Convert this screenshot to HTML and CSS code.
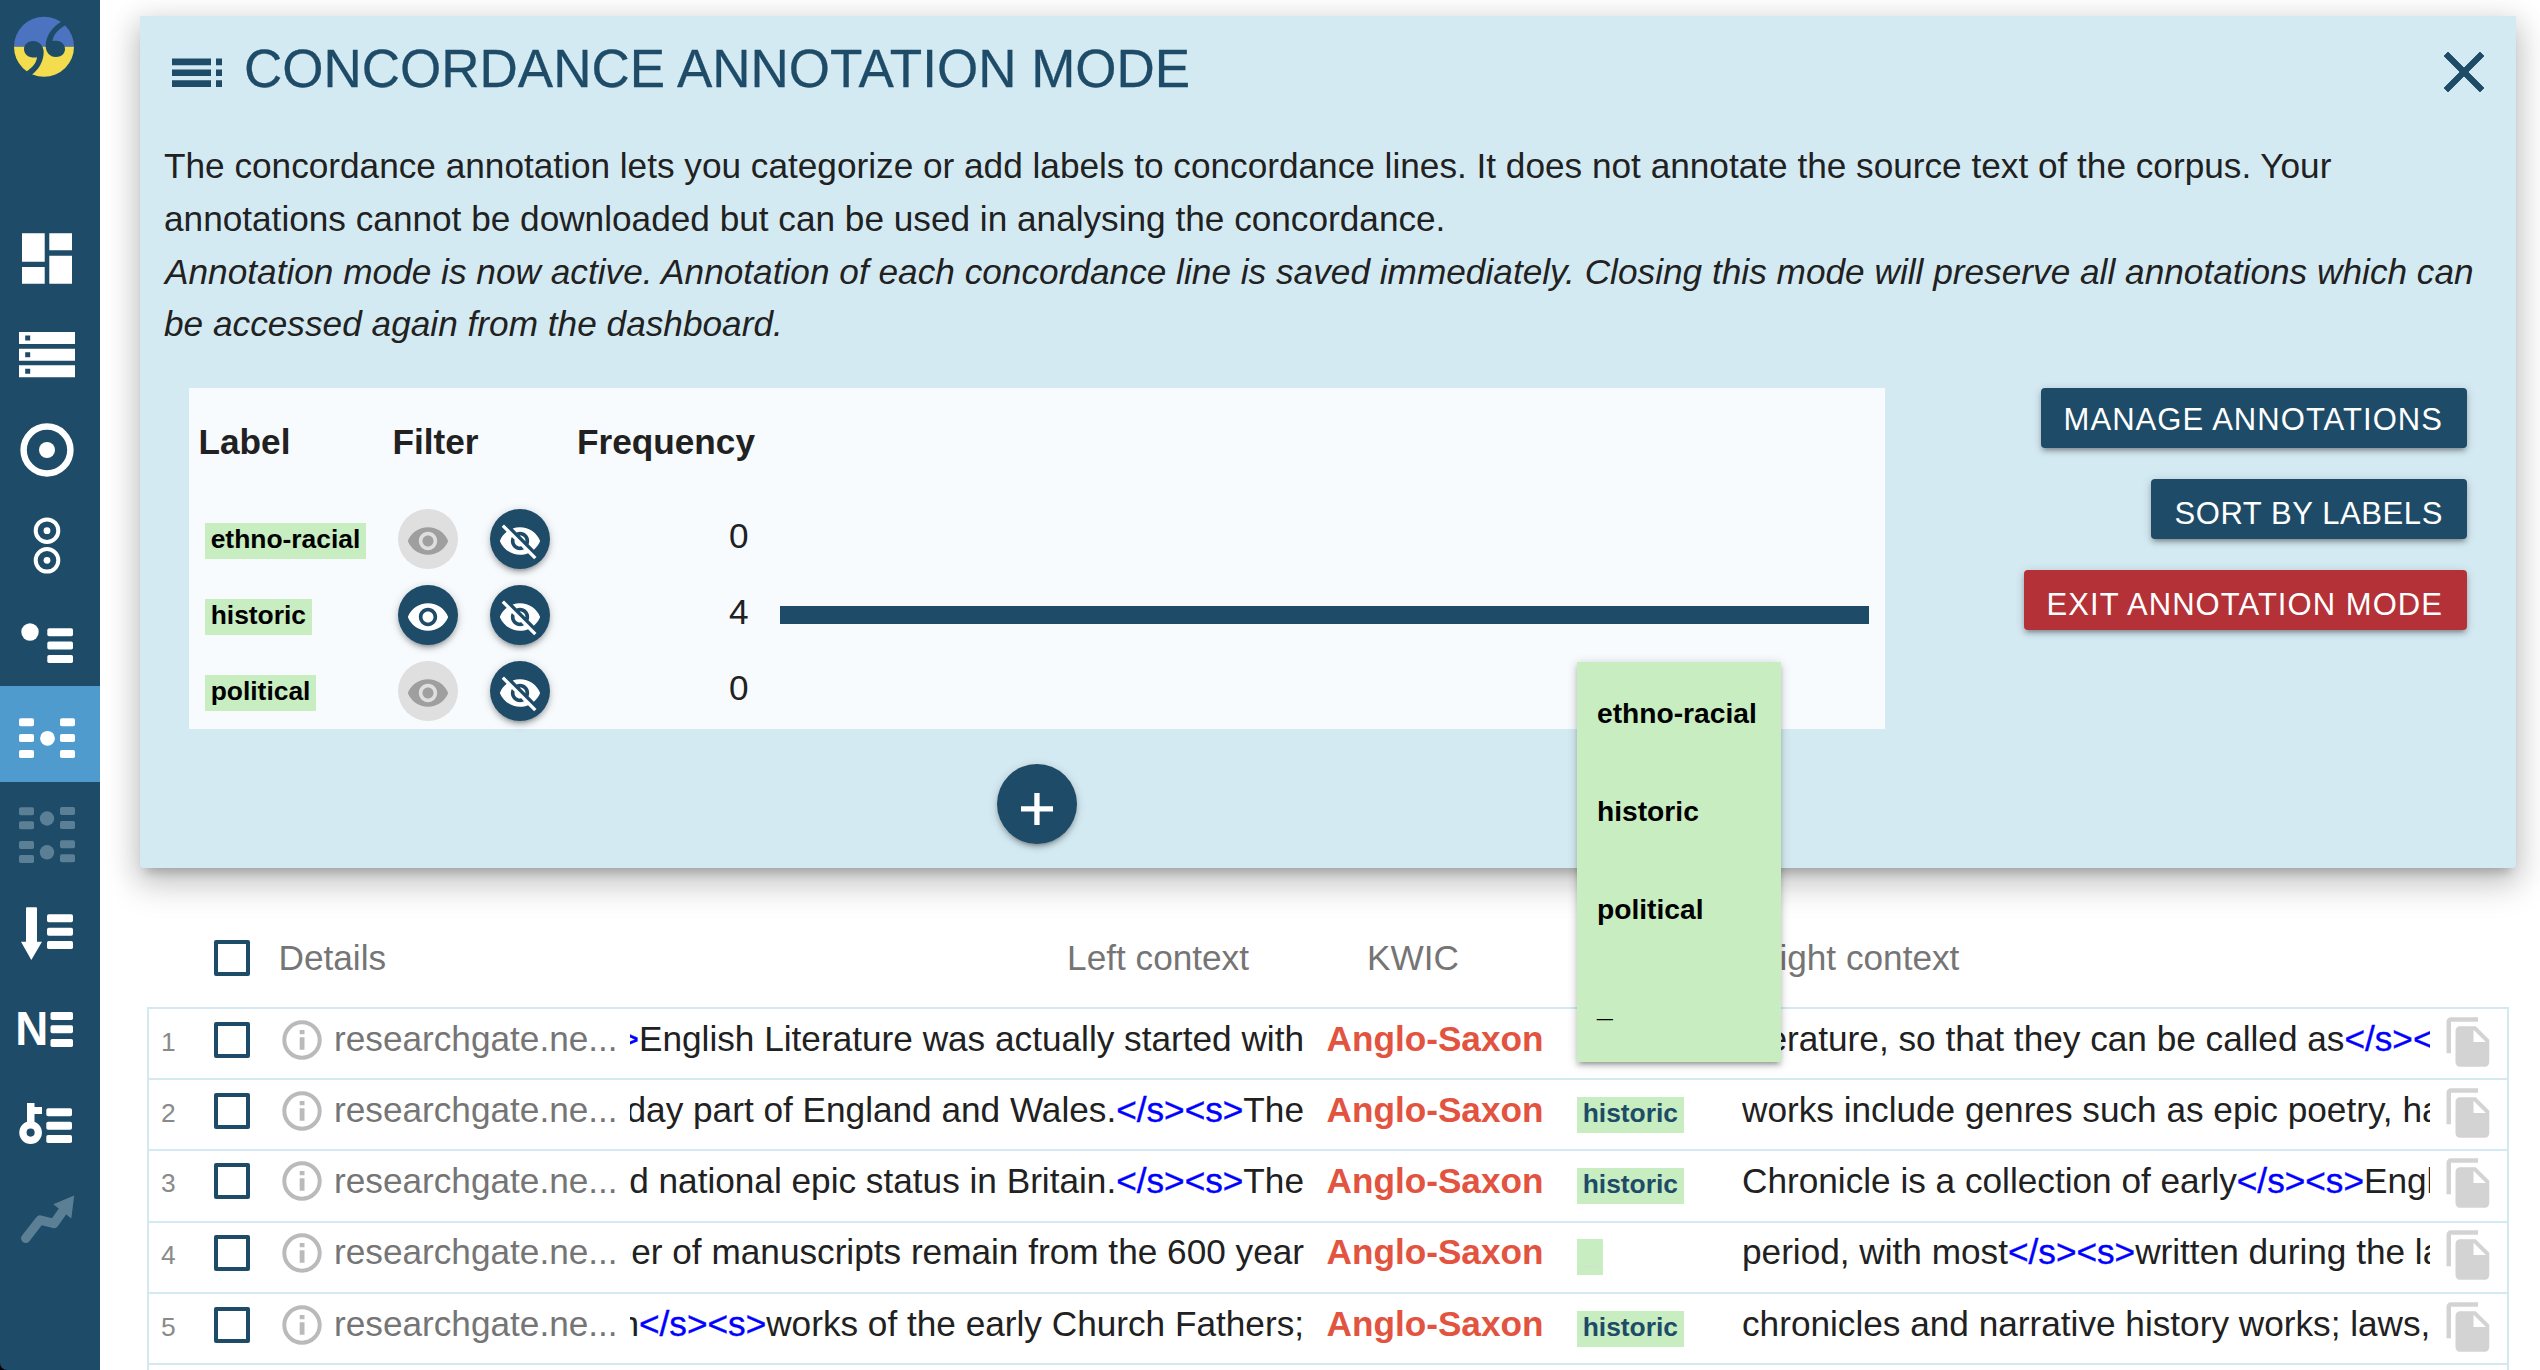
FILE: index.html
```html
<!DOCTYPE html>
<html lang="en">
<head>
<meta charset="utf-8">
<title>Concordance annotation</title>
<link rel="stylesheet" href="styles.css">
</head>
<body>
<svg class="defs" width="0" height="0">
  <symbol id="eye" viewBox="0 0 24 24"><path d="M12 4.5C7 4.5 2.73 7.61 1 12c1.73 4.39 6 7.5 11 7.5s9.27-3.11 11-7.5c-1.73-4.39-6-7.5-11-7.5zM12 17c-2.76 0-5-2.24-5-5s2.24-5 5-5 5 2.24 5 5-2.24 5-5 5zm0-8c-1.66 0-3 1.34-3 3s1.34 3 3 3 3-1.34 3-3-1.34-3-3-3z"/></symbol>
  <symbol id="eye-off" viewBox="0 0 24 24"><path d="M12 7c2.76 0 5 2.24 5 5 0 .65-.13 1.26-.36 1.83l2.92 2.92c1.51-1.26 2.7-2.89 3.43-4.75-1.73-4.39-6-7.5-11-7.5-1.4 0-2.74.25-3.98.7l2.16 2.16C10.74 7.13 11.35 7 12 7zM2 4.27l2.28 2.28.46.46C3.08 8.3 1.78 10.02 1 12c1.73 4.39 6 7.5 11 7.5 1.55 0 3.03-.3 4.38-.84l.42.42L19.73 22 21 20.73 3.27 3 2 4.27zM7.53 9.8l1.55 1.55c-.05.21-.08.43-.08.65 0 1.66 1.34 3 3 3 .22 0 .44-.03.65-.08l1.55 1.55c-.67.33-1.41.53-2.2.53-2.76 0-5-2.24-5-5 0-.79.2-1.53.53-2.2zm4.31-.78l3.15 3.15.02-.16c0-1.66-1.34-3-3-3l-.17.01z"/></symbol>
  <symbol id="info" viewBox="0 0 40 40"><circle cx="20" cy="20" r="17.7" fill="none" stroke="#bababa" stroke-width="4"/><path fill="#bababa" d="M17.7 10h4.8v4.2h-4.8zM17.7 17.2h4.8v12.6h-4.8z"/></symbol>
  <symbol id="copy" viewBox="0 0 24 24"><path d="M16 1H4c-1.1 0-2 .9-2 2v14h2V3h12V1zm-1 4l6 6v10c0 1.1-.9 2-1.99 2H7.99C6.89 23 6 22.1 6 21l.01-14c0-1.1.89-2 1.99-2h7zm-1 7h5.5L14 6.5V12z"/></symbol>
</svg>

<nav class="rail">
  <div class="rail-inner">
    <svg class="logo" viewBox="0 0 100 206">
      <path fill="#4b73c0" d="M14 46.7a30 30 0 0 1 60 0z"/>
      <path fill="#f3dd4f" d="M14 46.7a30 30 0 0 0 60 0z"/>
      <path class="quote" d="M37 57.3C31 58.5 24 56 24 49C24 44 28.5 41 33 41C39.5 41 43.7 46 43.7 52C43.7 61 39 69.500 31.500 75L26.500 71.500C32.500 67.500 36.500 63 37 57.300z"/>
      <path class="quote" d="M52.600 41.300C59 39.500 65 43 65 49C65 54 61 57 56 57C49.500 57 45.700 52 45.700 46C45.700 37 51 28 61.500 21.500L65.700 25C58 29.500 52.800 35 52.600 41.300z"/>
    </svg>
    <svg class="item" viewBox="0 0 100 96"><path d="M22 27.300h22.700v28.400H22zM22 61h22.700v16.700H22zM49.300 27.300H72v17H49.300zM49.300 49.700H72v28H49.300z"/></svg>
    <svg class="item" viewBox="0 0 100 96"><path fill-rule="evenodd" d="M19 30h56v12H19zM25.200 33.500v5h5v-5zM19 46.800h56v12H19zM25.200 50.200v5h5v-5zM19 63.300h56v12H19zM25.200 66.700v5h5v-5z"/></svg>
    <svg class="item" viewBox="0 0 100 96"><circle class="ring" cx="47" cy="52" r="23.400" stroke-width="6.500"/><circle cx="47" cy="52" r="8"/></svg>
    <svg class="item" viewBox="0 0 100 96"><g class="ring" stroke-width="4"><circle cx="47" cy="36.700" r="11.300"/><circle cx="47" cy="66.300" r="11.300"/></g><circle cx="47" cy="36.700" r="3.400"/><circle cx="47" cy="66.300" r="3.400"/></svg>
    <svg class="item" viewBox="0 0 100 96"><circle cx="30" cy="42" r="8.700"/><rect x="47.300" y="38.200" width="25.700" height="8" rx="1.800"/><rect x="47.300" y="51.600" width="25.700" height="8" rx="1.800"/><rect x="47.300" y="65" width="25.700" height="8" rx="1.800"/></svg>
    <svg class="item active" viewBox="0 0 100 96"><rect x="19" y="32.300" width="15" height="8" rx="1.800"/><rect x="19" y="48" width="15" height="8" rx="1.800"/><rect x="19" y="64" width="15" height="8" rx="1.800"/><rect x="60" y="32.300" width="15" height="8" rx="1.800"/><rect x="60" y="48" width="15" height="8" rx="1.800"/><rect x="60" y="64" width="15" height="8" rx="1.800"/><circle cx="47.500" cy="52.300" r="7.400"/></svg>
    <svg class="item muted" viewBox="0 0 100 96"><rect x="19" y="25.300" width="15" height="8" rx="1.800"/><rect x="19" y="39.300" width="15" height="8" rx="1.800"/><rect x="19" y="59" width="15" height="8" rx="1.800"/><rect x="19" y="73" width="15" height="8" rx="1.800"/><rect x="60" y="25" width="15" height="8" rx="1.800"/><rect x="60" y="39" width="15" height="8" rx="1.800"/><rect x="60" y="58.300" width="15" height="8" rx="1.800"/><rect x="60" y="72.300" width="15" height="8" rx="1.800"/><circle cx="47" cy="36.500" r="7.200"/><circle cx="47" cy="70.300" r="7.200"/></svg>
    <svg class="item" viewBox="0 0 100 96"><path d="M27 29.300h9q1 0 1 1V63.700h5L31.300 82 21 63.700h5V30.300q0-1 1-1z"/><rect x="47" y="36.300" width="26" height="8" rx="1.800"/><rect x="47" y="49.700" width="26" height="8" rx="1.800"/><rect x="47" y="63" width="26" height="8" rx="1.800"/></svg>
    <svg class="item" viewBox="0 0 100 96"><text class="n-mark" x="15.300" y="71" textLength="33" lengthAdjust="spacingAndGlyphs">N</text><rect x="50.500" y="38" width="22.500" height="8" rx="1.800"/><rect x="50.500" y="51.300" width="22.500" height="8" rx="1.800"/><rect x="50.500" y="65" width="22.500" height="8" rx="1.800"/></svg>
    <svg class="item" viewBox="0 0 100 96"><path d="M27 33h7.500v4H42v7h-7.500v14H27z"/><circle class="ring" cx="30.600" cy="62.600" r="7.700" stroke-width="7.300"/><rect x="46.300" y="38.300" width="25.700" height="8" rx="1.800"/><rect x="46.300" y="51.700" width="25.700" height="8" rx="1.800"/><rect x="46.300" y="65" width="25.700" height="8" rx="1.800"/></svg>
    <svg class="item muted" viewBox="0 0 100 96"><path class="trend" d="M25.700 72.300L40 54L54 57.500L66 40.500"/><path d="M74.200 29.500L53.300 38.300L71.300 52.500z"/></svg>
  </div>
</nav>

<main class="main">
  <section class="panel">
    <header class="panel-head">
      <svg class="toc" viewBox="0 0 50 30"><path d="M0 .5h39v6.700H0zM0 11.500h39v6.500H0zM0 22.300h39V29H0zM44 .5h6v6.700h-6zM44 11.500h6v6.500h-6zM44 22.300h6V29h-6z"/></svg>
      <h1>CONCORDANCE ANNOTATION MODE</h1>
      <svg class="close" viewBox="5 5 14 14"><path d="M19 6.410L17.590 5 12 10.590 6.410 5 5 6.410 10.590 12 5 17.590 6.410 19 12 13.410 17.590 19 19 17.590 13.410 12z"/></svg>
    </header>
    <p class="desc">The concordance annotation lets you categorize or add labels to concordance lines. It does not annotate the source text of the corpus. Your annotations cannot be downloaded but can be used in analysing the concordance.<br>
    <i>Annotation mode is now active. Annotation of each concordance line is saved immediately. Closing this mode will preserve all annotations which can be accessed again from the dashboard.</i></p>
    <div class="panel-body">
      <div class="labels-col">
        <div class="labels">
          <div class="lrow lhead"><b>Label</b><b>Filter</b><b>Frequency</b></div>
          <div class="lrow">
            <div class="lname"><span class="chip">ethno-racial</span></div>
            <div class="filters"><span class="round off"><svg><use href="#eye"/></svg></span><span class="round"><svg><use href="#eye-off"/></svg></span></div>
            <div class="freq">0</div>
          </div>
          <div class="lrow">
            <div class="lname"><span class="chip">historic</span></div>
            <div class="filters"><span class="round"><svg><use href="#eye"/></svg></span><span class="round"><svg><use href="#eye-off"/></svg></span></div>
            <div class="freq">4</div>
            <div class="track"><div class="fill" style="width:100%"></div></div>
          </div>
          <div class="lrow">
            <div class="lname"><span class="chip">political</span></div>
            <div class="filters"><span class="round off"><svg><use href="#eye"/></svg></span><span class="round"><svg><use href="#eye-off"/></svg></span></div>
            <div class="freq">0</div>
          </div>
        </div>
        <div class="add"><svg viewBox="0 0 32 32"><path d="M13.300 0h5.300v13.300H32v5.300H18.600V32h-5.300V18.600H0v-5.300h13.300z"/></svg></div>
      </div>
      <div class="actions">
        <a class="btn first">MANAGE ANNOTATIONS</a>
        <a class="btn sort">SORT BY LABELS</a>
        <a class="btn danger">EXIT ANNOTATION MODE</a>
      </div>
    </div>
  </section>

  <section class="results">
    <div class="row head">
      <span></span><span class="check"></span><span class="h-details">Details</span><span class="h-left">Left context</span><span class="h-kwic">KWIC</span><span class="h-right">Right context</span>
    </div>
    <div class="lines">
      <div class="row">
        <span class="num">1</span><span class="check"></span><svg class="info"><use href="#info"/></svg><span class="doc">researchgate.ne...</span>
        <div class="left"><span><em>&gt;</em>English Literature was actually started with</span></div>
        <span class="kwic">Anglo-Saxon</span><div class="ann"></div>
        <div class="right">literature, so that they can be called as<em>&lt;/s&gt;&lt;s&gt;</em></div><svg class="copy"><use href="#copy"/></svg>
      </div>
      <div class="row">
        <span class="num">2</span><span class="check"></span><svg class="info"><use href="#info"/></svg><span class="doc">researchgate.ne...</span>
        <div class="left"><span>day part of England and Wales.<em>&lt;/s&gt;&lt;s&gt;</em>The</span></div>
        <span class="kwic">Anglo-Saxon</span><div class="ann"><span class="chip">historic</span></div>
        <div class="right">works include genres such as epic poetry, hag</div><svg class="copy"><use href="#copy"/></svg>
      </div>
      <div class="row tall">
        <span class="num">3</span><span class="check"></span><svg class="info"><use href="#info"/></svg><span class="doc">researchgate.ne...</span>
        <div class="left"><span>d national epic status in Britain.<em>&lt;/s&gt;&lt;s&gt;</em>The</span></div>
        <span class="kwic">Anglo-Saxon</span><div class="ann"><span class="chip">historic</span></div>
        <div class="right">Chronicle is a collection of early<em>&lt;/s&gt;&lt;s&gt;</em>Engli</div><svg class="copy"><use href="#copy"/></svg>
      </div>
      <div class="row raised">
        <span class="num">4</span><span class="check"></span><svg class="info"><use href="#info"/></svg><span class="doc">researchgate.ne...</span>
        <div class="left"><span>ber of manuscripts remain from the 600 year</span></div>
        <span class="kwic">Anglo-Saxon</span><div class="ann"><span class="chip blank">_</span></div>
        <div class="right">period, with most<em>&lt;/s&gt;&lt;s&gt;</em>written during the la</div><svg class="copy"><use href="#copy"/></svg>
      </div>
      <div class="row">
        <span class="num">5</span><span class="check"></span><svg class="info"><use href="#info"/></svg><span class="doc">researchgate.ne...</span>
        <div class="left"><span>n<em>&lt;/s&gt;&lt;s&gt;</em>works of the early Church Fathers;</span></div>
        <span class="kwic">Anglo-Saxon</span><div class="ann"><span class="chip">historic</span></div>
        <div class="right">chronicles and narrative history works; laws,</div><svg class="copy"><use href="#copy"/></svg>
      </div>
      <div class="row"></div>
    </div>
  </section>

  <div class="menu"><span>ethno-racial</span><span>historic</span><span>political</span><span>_</span></div>
</main>
</body>
</html>
```
FILE: styles.css
```css
* { box-sizing: border-box; }
body {
  margin: 0;
  height: 1370px;
  display: flex;
  overflow: hidden;
  background: #fff;
  color: #212121;
  font: 35.2px/52.8px "Liberation Sans", Arial, Helvetica, sans-serif;
}
svg { display: block; flex: none; }
.defs { position: absolute; }

/* navigation rail */
.rail { flex: none; width: 100px; height: 1370px; background: #000; position: relative; z-index: 2; }
.rail-inner { height: 100%; background: #1e4b67; border-bottom-left-radius: 7px; }
.logo { width: 100px; height: 206px; }
.quote { fill: #1e4b67; }
.item { width: 100px; height: 96px; fill: #fff; }
.item.active { background: #4f9bcd; }
.item.muted { fill: #5b8095; }
.ring { fill: none; stroke: #fff; }
.trend { fill: none; stroke: #5b8095; stroke-width: 9.300px; stroke-linecap: round; stroke-linejoin: round; }
.n-mark { font: bold 47.500px "Liberation Sans", Arial, sans-serif; }

.main { flex: 1; min-width: 0; position: relative; }

/* annotation panel */
.panel {
  margin: 16px 24px 0 40px;
  height: 852px;
  padding: 0 24px;
  background: #d4eaf2;
  border-radius: 0 0 4px 4px;
  box-shadow: 0 16px 34px 4px rgba(0,0,0,.14), 0 6px 28px 4px rgba(0,0,0,.12), 0 10px 10px -6px rgba(0,0,0,.2);
}
.panel-head { display: flex; align-items: center; height: 106px; margin-bottom: 18px; padding: 0 8px; }
h1 { margin: 0; flex: 1; font-size: 53px; font-weight: 400; line-height: 1.2; color: #1e4b67; -webkit-text-stroke: .3px; }
.toc { width: 50px; height: 30px; margin: 8px 22px 0 0; fill: #1e4b67; }
.close { width: 40px; height: 40px; margin-top: 5px; fill: #1e4b67; stroke: #1e4b67; stroke-width: .3; }
.desc { margin: 0 0 37px; color: #212121; }
.desc i { letter-spacing: .018px; margin-left: 1px; }
.panel-body { display: flex; justify-content: space-between; padding: 0 25px; }
.labels { width: 1696px; height: 341px; background: #f7fbfe; }
.lrow { display: grid; grid-template-columns: 194px 184.500px 173px 1fr; align-items: center; height: 76px; padding: 0 16px 0 8px; }
.lhead { height: 113px; padding-bottom: 5px; padding-left: 9.500px; }
.chip {
  display: block;
  width: max-content;
  height: 36px;
  margin-top: 4px;
  padding: 0 5.700px;
  background: #c7edc1;
  color: #000;
  font-size: 26.400px;
  font-weight: 700;
  line-height: 32px;
}
.lname { padding-left: 8px; }
.filters { display: flex; gap: 32px; padding-left: 7px; }
.round {
  display: flex; align-items: center; justify-content: center;
  width: 60px; height: 60px; padding-top: 4px;
  border-radius: 50%;
  background: #1e4b67; fill: #fff;
  box-shadow: 0 4px 4px rgba(0,0,0,.14), 0 6px 2px -4px rgba(0,0,0,.12), 0 2px 10px rgba(0,0,0,.2);
}
.round svg { width: 44px; height: 44px; }
.round.off { background: #dfdfdf; fill: #9f9f9f; box-shadow: none; }
.freq { text-align: right; padding-bottom: 6px; }
.track { height: 18px; margin-left: 31.500px; }
.fill { height: 100%; background: #1e4b67; }
.add {
  display: flex; align-items: center; justify-content: center;
  width: 80px; height: 80px; margin: 35px auto 0; padding-top: 9px;
  border-radius: 50%;
  background: #1e4b67; fill: #fff;
  box-shadow: 0 4px 4px rgba(0,0,0,.14), 0 6px 2px -4px rgba(0,0,0,.12), 0 2px 10px rgba(0,0,0,.2);
}
.add svg { width: 32px; height: 32px; }
.actions { display: flex; flex-direction: column; align-items: flex-end; gap: 31px; }
.btn {
  height: 60px;
  padding: 5px 24px 0 23px;
  border-radius: 4px;
  background: #1e4b67;
  color: #fff;
  font-size: 31px;
  line-height: 60px;
  letter-spacing: 1.050px;
  white-space: nowrap;
  box-shadow: 0 4px 4px rgba(0,0,0,.14), 0 6px 2px -4px rgba(0,0,0,.12), 0 2px 10px rgba(0,0,0,.2);
}
.btn.first { padding-top: 2px; }
.btn.sort { letter-spacing: .6px; }
.btn.danger { background: #b43137; }

/* concordance lines */
.results { margin: 41px 31px 0 47px; }
.row {
  display: grid;
  grid-template-columns: 65px 67.500px 51.500px 297px 674px 273px 165px 688px 1fr;
  align-items: center;
  height: 71px;
  padding-bottom: 8px;
  border-bottom: 2px solid #d4eaf2;
  white-space: nowrap;
}
.row.tall { height: 72px; padding-bottom: 10px; }
.row.raised { padding-bottom: 10px; }
.row.head { height: 98px; padding: 0 2px; border: 0; color: #757575; }
.lines { border: 2px solid #d4eaf2; }
.h-details { grid-column: 3 / 5; margin-left: -3px; }
.h-left { text-align: right; padding-right: 55px; }
.h-kwic { padding-left: 63px; }
.h-right { grid-column: 8; padding-left: 12px; }
.num { padding: 5px 0 0 12px; font-size: 26.400px; color: #8a8a8a; }
.check { width: 36px; height: 36px; border: 4px solid #1e4b67; border-radius: 2px; }
.info { width: 40px; height: 40px; }
.doc { padding-left: 1px; color: #757575; }
.left { display: flex; justify-content: flex-end; overflow: hidden; }
.right { overflow: hidden; }
.left em, .right em { font-style: normal; color: #00f; -webkit-text-stroke: .4px; }
.kwic { padding-left: 22.500px; color: #e2543f; font-weight: 700; }
.ann .chip { margin-top: 9px; color: #1e4b67; }
.ann .chip.blank { color: #d9d9d9; }
.copy { width: 54px; height: 54px; margin: 4px 0 0 11.500px; fill: #d3d3d3; }

/* label picker floats over the panel and the lines */
.menu {
  position: absolute;
  left: 1477px; top: 662px;
  width: 204px; height: 400px;
  padding: 2px 0 0 20px;
  display: flex; flex-direction: column;
  background: #c7edc1;
  color: #000;
  font-size: 28.200px;
  font-weight: 700;
  line-height: 98px;
  box-shadow: 0 4px 4px rgba(0,0,0,.14), 0 6px 2px -4px rgba(0,0,0,.12), 0 2px 10px rgba(0,0,0,.2);
}
```
